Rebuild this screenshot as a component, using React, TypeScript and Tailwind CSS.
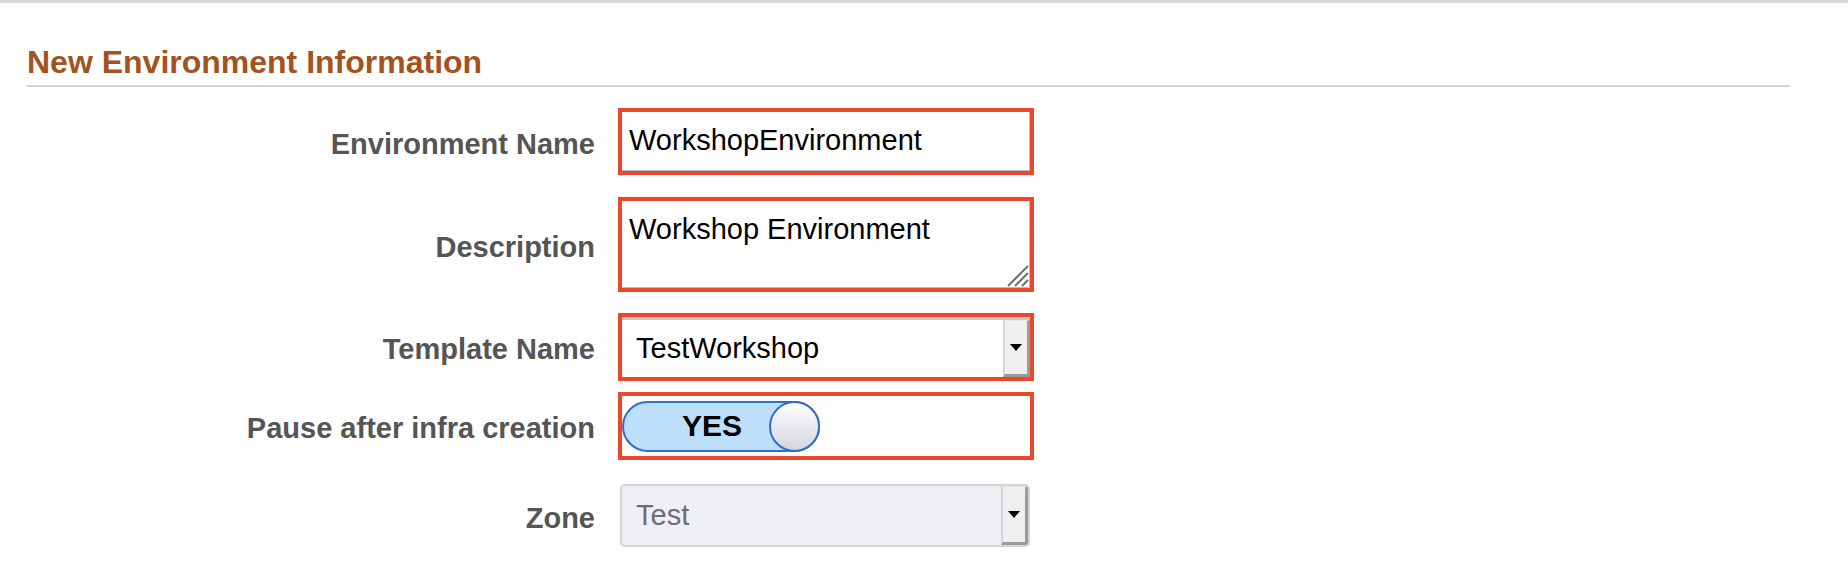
import React from "react";

function Caret() {
  return (
    <span className="block w-0 h-0 border-l-[6px] border-r-[6px] border-t-[7px] border-l-transparent border-r-transparent border-t-black" />
  );
}

function DropButton() {
  return (
    <div className="w-[27px] self-stretch flex items-center justify-center bg-[#efefef] border-l-2 border-l-[#d6d6d6] border-r-[3px] border-r-[#9b9b9b] border-b-[3px] border-b-[#9b9b9b] border-t border-t-[#e6e6e6]">
      <Caret />
    </div>
  );
}

function FormRow({
  label,
  children,
  className,
}: {
  label: string;
  children: React.ReactNode;
  className?: string;
}) {
  return (
    <div className={`flex items-center ${className || ""}`}>
      <label className="w-[591px] pr-[23px] pt-[5px] text-right text-[29px] font-bold text-[#555555] leading-none">
        {label}
      </label>
      <div className="w-[416px]">{children}</div>
    </div>
  );
}

const App = () => {
  return (
    <div className="w-[1848px] h-[572px] bg-white font-['Liberation_Sans',Arial,sans-serif] border-t-[3px] border-[#d5d8dd] overflow-hidden">
      <div className="pl-[27px] pr-[58px]">
        <div className="mt-[43px] h-[41px] border-b-2 border-[#cfd3d8]">
          <h2 className="text-[32px] leading-none font-bold text-[#a3531f]">
            New Environment Information
          </h2>
        </div>

        {/* Environment name */}
        <FormRow label="Environment Name" className="mt-[21px]">
          <div className="h-[67px] border-[4px] border-[#ea472b] bg-white flex items-center">
            <div className="w-full h-full border-r border-b border-[#b9bcc2] flex items-center pl-[7px] text-[29px] text-black">
              WorkshopEnvironment
            </div>
          </div>
        </FormRow>

        {/* Description */}
        <FormRow label="Description" className="mt-[22px]">
          <div className="h-[95px] border-[4px] border-[#ea472b] bg-white relative">
            <div className="h-full border-r border-b border-[#b9bcc2] pl-[7px] pt-[11px] text-[29px] leading-[34px] text-black">
              Workshop Environment
            </div>
            <svg
              className="absolute right-[1px] bottom-[1px]"
              width="26"
              height="26"
              viewBox="0 0 26 26"
            >
              <path d="M25 5 L5 25 M25 12 L12 25 M25 19 L19 25" stroke="#6f6f6f" strokeWidth="2" />
            </svg>
          </div>
        </FormRow>

        {/* Template name */}
        <FormRow label="Template Name" className="mt-[21px]">
          <div className="h-[68px] border-[4px] border-[#ea472b] bg-white">
            <div className="h-full flex border-t-[3px] border-[#c7c9cd]">
              <div className="flex-1 flex items-center pl-[14px] text-[29px] text-black">
                TestWorkshop
              </div>
              <DropButton />
            </div>
          </div>
        </FormRow>

        {/* Pause toggle */}
        <FormRow label="Pause after infra creation" className="mt-[11px]">
          <div className="h-[68px] border-[4px] border-[#ea472b] bg-white flex items-center">
            <div className="relative w-[198px] h-[51px] rounded-full bg-[#bddff9] border-2 border-[#2f6fcc] flex items-center">
              <span className="w-[176px] text-center text-[30px] font-bold text-black leading-none">
                YES
              </span>
              <span className="absolute right-[-2px] top-[-2px] w-[51px] h-[51px] rounded-full border-2 border-[#2f6fcc] bg-gradient-to-b from-white to-[#d3d6dc]" />
            </div>
          </div>
        </FormRow>

        {/* Zone */}
        <FormRow label="Zone" className="mt-[24px]">
          <div className="ml-[2px] w-[410px] h-[63px] rounded-[5px] border-2 border-[#d2d4d8] bg-[#eff0f4] flex overflow-hidden">
            <div className="flex-1 flex items-center pl-[14px] text-[29px] text-[#6b6e73]">
              Test
            </div>
            <DropButton />
          </div>
        </FormRow>
      </div>
    </div>
  );
};

export default App;
